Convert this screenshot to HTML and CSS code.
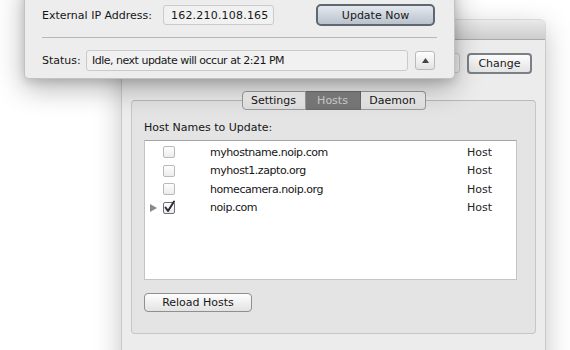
FILE: index.html
```html
<!DOCTYPE html>
<html lang="en">
<head>
    <meta charset="UTF-8">
    <meta name="viewport" content="width=device-width, initial-scale=1.0">
    <title>No-IP DUC</title>
    <link rel="stylesheet" href="styles.css">
</head>
<body>
    <div class="desk">
        <div class="window">
            <div class="titlebar"></div>
            <div class="win-body">
                <div class="top-row">
                    <div class="field wide"></div>
                    <div class="btn focus change">Change</div>
                </div>
                <div class="tabbox">
                    <div class="tabs">
                        <span class="tab settings">Settings</span>
                        <span class="tab hosts on">Hosts</span>
                        <span class="tab daemon">Daemon</span>
                    </div>
                    <div class="group">
                        <div class="group-title">Host Names to Update:</div>
                        <div class="table">
                            <div class="row">
                                <span class="tri"></span>
                                <span class="check"></span>
                                <span class="name">myhostname.noip.com</span>
                                <span class="kind">Host</span>
                            </div>
                            <div class="row">
                                <span class="tri"></span>
                                <span class="check"></span>
                                <span class="name">myhost1.zapto.org</span>
                                <span class="kind">Host</span>
                            </div>
                            <div class="row">
                                <span class="tri"></span>
                                <span class="check"></span>
                                <span class="name">homecamera.noip.org</span>
                                <span class="kind">Host</span>
                            </div>
                            <div class="row">
                                <span class="tri">
                                    <svg width="7" height="8" viewBox="0 0 7 8"><polygon points="0,0 7,4 0,8" fill="#8a8a8a"/></svg>
                                </span>
                                <span class="check on">
                                    <svg width="13" height="14" viewBox="0 0 13 14"><path d="M2.5 7.5 L5 11 L11 1.5" fill="none" stroke="#2b2e3a" stroke-width="2" stroke-linecap="round" stroke-linejoin="round"/></svg>
                                </span>
                                <span class="name">noip.com</span>
                                <span class="kind">Host</span>
                            </div>
                        </div>
                        <div class="btn reload">Reload Hosts</div>
                    </div>
                </div>
            </div>
        </div>

        <div class="popover">
            <div class="pop-row">
                <span class="label ip-label">External IP Address:</span>
                <div class="field ip">162.210.108.165</div>
                <div class="btn default update">Update Now</div>
            </div>
            <div class="sep"></div>
            <div class="pop-row status-row">
                <span class="label status-label">Status:</span>
                <div class="field status">Idle, next update will occur at 2:21 PM</div>
                <div class="btn mini">
                    <svg width="7" height="5" viewBox="0 0 7 5"><polygon points="3.5,0 7,5 0,5" fill="#444"/></svg>
                </div>
            </div>
        </div>
    </div>
</body>
</html>
```

FILE: styles.css
```css
body {
    margin: 0;
    background: #fff;
    font-family: "DejaVu Sans", "Liberation Sans", sans-serif;
    font-size: 11px;
    color: #151515;
    overflow: hidden;
}
.desk {
    position: relative;
    width: 570px;
    height: 350px;
    overflow: hidden;
}

/* back window */
.window {
    position: absolute;
    left: 122px;
    top: 20px;
    width: 423px;
    height: 360px;
    background: #ececec;
    border-radius: 5px 5px 0 0;
    box-shadow: 0 0 0 1px rgba(0, 0, 0, 0.1), 0 8px 28px rgba(0, 0, 0, 0.25);
}
.titlebar {
    height: 19px;
    border-radius: 5px 5px 0 0;
    background: linear-gradient(#e9e9e9, #cdcdcd);
    border-bottom: 1px solid #a9a9a9;
}
.win-body {
    padding: 13px 9px 0;
}
.top-row {
    display: flex;
    justify-content: flex-end;
    align-items: center;
    gap: 7px;
    padding-right: 4px;
    height: 20px;
}
.field {
    box-sizing: border-box;
    height: 20px;
    background: #f1f1f1;
    border: 1px solid #cacaca;
    border-radius: 3px;
    display: flex;
    align-items: center;
    padding-left: 7px;
    white-space: nowrap;
    color: #181818;
}
.field.wide {
    width: 200px;
}
.btn {
    box-sizing: border-box;
    display: flex;
    align-items: center;
    justify-content: center;
    background: linear-gradient(#fdfdfd, #e3e3e3);
    border: 1px solid #8f8f8f;
    border-radius: 4px;
    color: #181818;
}
.btn.focus {
    border: 2px solid #7b8087;
}
.change {
    width: 65px;
    height: 21px;
}

/* tabs + group box */
.tabbox {
    margin-top: 18px;
}
.tabs {
    position: relative;
    z-index: 1;
    display: flex;
    justify-content: center;
    margin-bottom: -10px;
    height: 19px;
}
.tab {
    box-sizing: border-box;
    display: flex;
    align-items: center;
    justify-content: center;
    height: 19px;
    background: linear-gradient(#fbfbfb, #dedede);
    border: 1px solid #9c9c9c;
    border-left: none;
}
.tab.settings {
    width: 64px;
    border-left: 1px solid #9c9c9c;
    border-radius: 4px 0 0 4px;
}
.tab.hosts {
    width: 55px;
}
.tab.daemon {
    width: 65px;
    border-radius: 0 4px 4px 0;
}
.tab.on {
    background: linear-gradient(#858585, #747474);
    border-color: #6a6a6a;
    color: #d2d2d2;
}
.group {
    box-sizing: border-box;
    height: 234px;
    background: #e4e4e4;
    border: 1px solid #c6c6c6;
    border-top-color: #b9b9b9;
    border-radius: 4px;
    padding: 19px 18px 0 12px;
}
.group-title {
    height: 15px;
    line-height: 15px;
}
.table {
    box-sizing: border-box;
    height: 140px;
    margin-top: 5px;
    background: #fff;
    border: 1px solid #c4c4c4;
    border-top-color: #a4a4a4;
    padding-top: 2px;
}
.row {
    display: flex;
    align-items: center;
    height: 18.5px;
    padding-left: 5px;
}
.tri {
    width: 13px;
    display: flex;
    align-items: center;
}
.check {
    box-sizing: border-box;
    position: relative;
    width: 12px;
    height: 12px;
    border: 1px solid #b9b9b9;
    border-radius: 2px;
    background: linear-gradient(#fefefe, #ececec);
}
.check.on {
    border-color: #6e6e76;
}
.check svg {
    position: absolute;
    left: -1px;
    top: -3px;
}
.name {
    margin-left: 35px;
    width: 257px;
    letter-spacing: -0.45px;
}
.kind {
    color: #252525;
}
.reload {
    width: 108px;
    height: 19px;
    margin-top: 13px;
}

/* popover */
.popover {
    position: absolute;
    z-index: 2;
    left: 24px;
    top: -20px;
    width: 431px;
    box-sizing: border-box;
    padding: 24px 19px 7px 17px;
    background: #ededed;
    border: 1px solid #c2c2c2;
    border-top: none;
    border-radius: 0 0 5px 5px;
    box-shadow: 0 3px 8px rgba(0, 0, 0, 0.12), 0 9px 28px rgba(0, 0, 0, 0.3);
}
.pop-row {
    display: flex;
    align-items: center;
    height: 22px;
}
.label {
    flex: none;
}
.ip-label {
    width: 121px;
}
.field.ip {
    width: 111px;
    letter-spacing: 0.2px;
}
.update {
    margin-left: auto;
    width: 119px;
    height: 22px;
}
.btn.default {
    border: 2px solid #5f6871;
    border-radius: 5px;
    background: linear-gradient(#e4e8ee, #b9c2cd);
}
.sep {
    height: 1px;
    margin: 11px -2px 12px 0;
    background: #b7b7b7;
}
.status-row {
    height: 21px;
}
.status-label {
    width: 44px;
}
.field.status {
    width: 322px;
    height: 21px;
    padding-left: 5px;
    letter-spacing: -0.5px;
}
.mini {
    margin-left: auto;
    width: 20px;
    height: 19px;
    border-color: #b9b9b9;
    border-radius: 3px;
}
```
